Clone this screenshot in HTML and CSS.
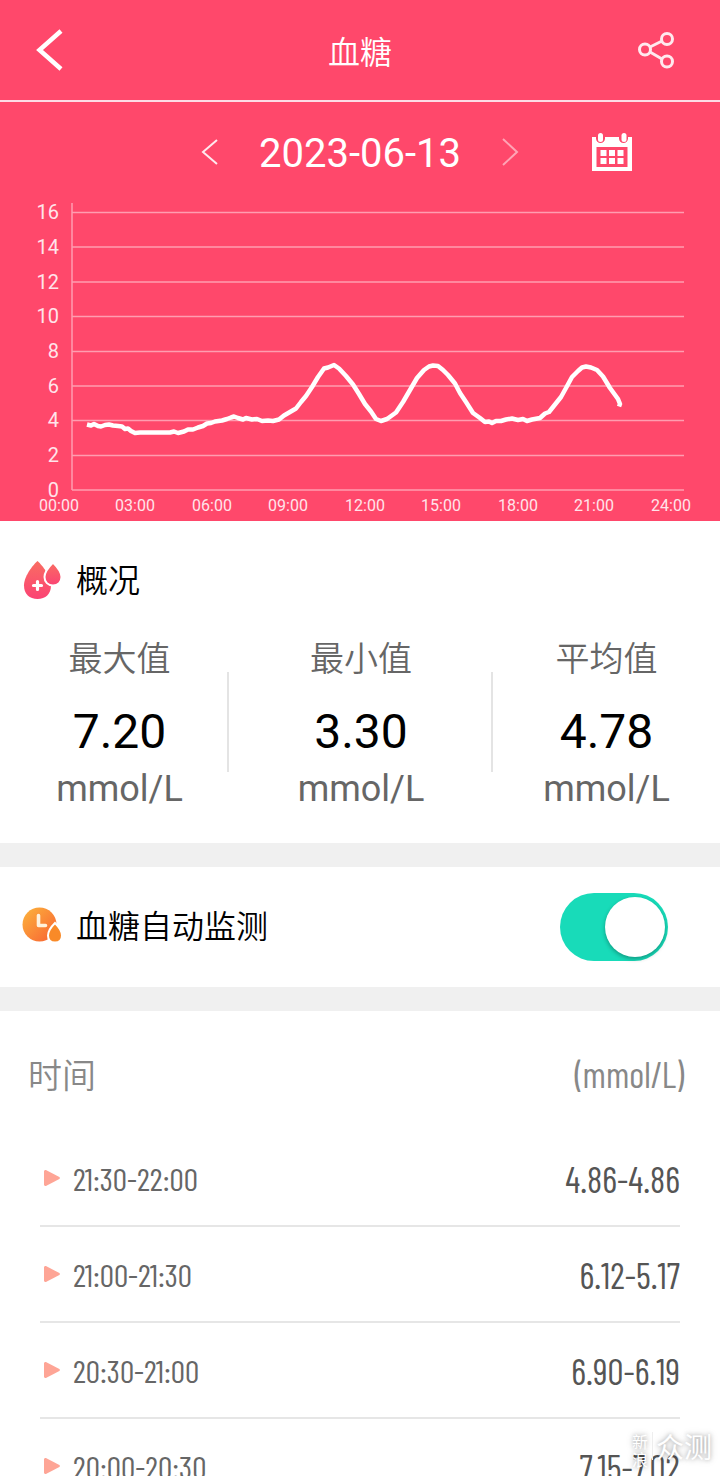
FILE: index.html
```html
<!DOCTYPE html>
<html lang="zh-CN">
<head>
  <meta charset="UTF-8" />
  <meta name="viewport" content="width=device-width, initial-scale=1.0" />
  <title>血糖</title>
  <link rel="stylesheet" href="styles.css">
</head>
<body>
  <div class="screen">
    <header class="navbar">
      <button class="icon-btn back" aria-label="返回">
        <svg width="28" height="42" viewBox="0 0 28 42"><path d="M25 2 3.500 21 25 40" fill="none" stroke="#fff" stroke-width="4.500"/></svg>
      </button>
      <h1>血糖</h1>
      <button class="icon-btn share" aria-label="分享">
        <svg width="38" height="38" viewBox="0 0 38 38" fill="none" stroke="#ffe9ee" stroke-width="3">
          <circle cx="7" cy="18.500" r="5.500"/><circle cx="29" cy="8" r="5.500"/><circle cx="29" cy="30.500" r="5.500"/>
          <path d="M12 16 24 10M12 21 24 28"/>
        </svg>
      </button>
    </header>

    <section class="chart-panel">
      <div class="date-row">
        <div class="date-picker">
          <button class="icon-btn" aria-label="前一天">
            <svg width="18" height="28" viewBox="0 0 18 28"><path d="M16 2 2 14 16 26" fill="none" stroke="#ffe9ee" stroke-width="2"/></svg>
          </button>
          <span class="date">2023-06-13</span>
          <button class="icon-btn next" aria-label="后一天">
            <svg width="18" height="28" viewBox="0 0 18 28"><path d="M2 1 16 14 2 27" fill="none" stroke="#fff" stroke-width="2"/></svg>
          </button>
        </div>
        <button class="icon-btn calendar" aria-label="选择日期">
          <svg width="40" height="38" viewBox="0 0 40 38">
            <path fill="#fff" fill-rule="evenodd" d="M0 4H4V5.500A4.500 4.500 0 0 0 13 5.500V4H27V5.500A4.500 4.500 0 0 0 36 5.500V4H40V38H0ZM4.500 14V34H35.500V14Z"/>
            <rect x="6" y="0" width="5" height="9" rx="2.500" fill="#fff"/><rect x="29.500" y="0" width="5" height="9" rx="2.500" fill="#fff"/>
            <path fill="#fff" d="M8.500 17h6v6h-6zM17 17h6v6h-6zM25.500 17h6v6h-6zM8.500 25h6v6h-6zM17 25h6v6h-6zM25.500 25h6v6h-6z"/>
          </svg>
        </button>
      </div>
      <svg class="chart" viewBox="0 202 720 319" role="img" aria-label="血糖曲线">
        <g class="grid">
          <path d="M72 203V490"/>
          <path d="M72 212.500H684M72 247H684M72 282H684M72 316.500H684M72 351.500H684M72 386H684M72 420.500H684M72 455.500H684M72 490H684"/>
        </g>
        <g class="y-labels">
          <text x="59" y="219">16</text>
          <text x="59" y="254">14</text>
          <text x="59" y="289">12</text>
          <text x="59" y="323">10</text>
          <text x="59" y="358">8</text>
          <text x="59" y="393">6</text>
          <text x="59" y="427">4</text>
          <text x="59" y="462">2</text>
          <text x="59" y="497">0</text>
        </g>
        <g class="x-labels">
          <text x="59" y="511">00:00</text>
          <text x="135" y="511">03:00</text>
          <text x="212" y="511">06:00</text>
          <text x="288" y="511">09:00</text>
          <text x="365" y="511">12:00</text>
          <text x="441" y="511">15:00</text>
          <text x="518" y="511">18:00</text>
          <text x="594" y="511">21:00</text>
          <text x="671" y="511">24:00</text>
        </g>
        <polyline class="curve" points="87,424.500 91,425.500 94,424 98,426 101,426.500 105,425 109,424.500 113,425.500 118,426 122,426.500 125,429 128,428.500 131,431 135,433 140,432.500 170,432.500 174,431.500 178,433 184,431.500 188,429.500 193,429.500 198,427.500 203,426 207,423.500 211,423 215,421.500 222,420.500 227,419 231,417.500 234,416.500 238,418 243,419.500 246,418 252,419.500 257,419 262,421 268,420.500 273,421 279,419.500 284,415.500 290,412 296,408.500 301,402 306,396 312,387 318,377 324,368.500 328,367.500 334,365 339,368.500 346,376 353,384.500 359,394 365,404 371,411.500 376,419 381,421 387,419 396,412.500 403,402 410,390 417,378 424,370 429,366.500 433,365.500 438,366 443,370 448,375 455,383.500 460,393 466,402 473,413 480,418 485,422 489,421.500 492,423 496,421 501,421 506,419.500 512,418.500 518,420 523,419 527,421 532,419.500 540,418 545,413.500 549,412 555,404.500 561,397 566,388 572,377 578,371 582,367.500 586,366.500 591,367.500 597,370 603,376.500 610,388 618,399 620,404 619,406.500"/>
      </svg>
    </section>

    <section class="overview">
      <h2 class="section-title">
        <svg width="40" height="40" viewBox="0 0 40 40">
          <defs><linearGradient id="drop" x1="0" y1="0" x2="0" y2="1"><stop offset="0" stop-color="#f96d62"/><stop offset="1" stop-color="#fb4374"/></linearGradient></defs>
          <path fill="url(#drop)" d="M15.500 0C18 2 29 14 29 24.500C29 33 23.500 38 15.500 38S2 33 2 24.500C2 14 13 2 15.500 0Z"/>
          <path fill="url(#drop)" stroke="#fff" stroke-width="2" d="M31 1.500C33 3.500 39.500 10 39.500 16C39.500 21 36 24.500 31 24.500S22.500 21 22.500 16C22.500 10 29 3.500 31 1.500Z"/>
          <path stroke="#fff" stroke-width="3.200" stroke-linecap="round" d="M11.500 24.500h8M15.500 20.500v8"/>
        </svg>
        概况
      </h2>
      <div class="stats">
        <div class="stat">
          <span class="stat-label">最大值</span>
          <span class="stat-value">7.20</span>
          <span class="stat-unit">mmol/L</span>
        </div>
        <div class="stat">
          <span class="stat-label">最小值</span>
          <span class="stat-value">3.30</span>
          <span class="stat-unit">mmol/L</span>
        </div>
        <div class="stat">
          <span class="stat-label">平均值</span>
          <span class="stat-value">4.78</span>
          <span class="stat-unit">mmol/L</span>
        </div>
      </div>
    </section>

    <section class="monitor">
      <label class="section-title" for="autoMonitor">
        <svg width="40" height="40" viewBox="0 0 40 40">
          <defs><linearGradient id="clock" x1="0" y1="0" x2="1" y2="1"><stop offset="0" stop-color="#fcb53c"/><stop offset="1" stop-color="#f86033"/></linearGradient></defs>
          <circle cx="17.500" cy="17.500" r="17" fill="url(#clock)"/>
          <path fill="none" stroke="#fff1dc" stroke-width="3.600" stroke-linecap="round" stroke-linejoin="round" d="M16.500 8.500V18.500H23.500"/>
          <path fill="#f98a28" stroke="#fff" stroke-width="2" d="M33 16C35 18 40 24 40 28.500C40 33 37.500 35.500 33 35.500S26 33 26 28.500C26 24 31 18 33 16Z"/>
        </svg>
        血糖自动监测
      </label>
      <input type="checkbox" class="switch" id="autoMonitor" checked>
    </section>

    <table class="records">
      <thead>
        <tr><th>时间</th><th class="unit">(mmol/L)</th></tr>
      </thead>
      <tbody>
        <tr><td class="time">21:30-22:00</td><td class="range">4.86-4.86</td></tr>
        <tr><td class="time">21:00-21:30</td><td class="range">6.12-5.17</td></tr>
        <tr><td class="time">20:30-21:00</td><td class="range">6.90-6.19</td></tr>
        <tr><td class="time">20:00-20:30</td><td class="range">7.15-7.02</td></tr>
      </tbody>
    </table>

    <div class="watermark">
      <span class="mark-small">新<br>浪</span>
      <span class="mark-large">众测</span>
    </div>
  </div>
</body>
</html>
```
FILE: styles.css
```css
* {
  box-sizing: border-box;
}
body {
  margin: 0;
  font-family: Roboto, "Noto Sans CJK SC", sans-serif;
  background: #fff;
  color: #000;
}
.screen {
  position: relative;
  height: 100vh;
  overflow: hidden;
}
.icon-btn {
  display: flex;
  padding: 0;
  border: none;
  background: none;
  cursor: pointer;
}
.navbar {
  display: grid;
  grid-template-columns: 1fr auto 1fr;
  align-items: center;
  height: 102px;
  padding: 0 36px;
  background: #ff486b;
  border-bottom: 2px solid #fddbe5;
}
.navbar h1 {
  margin: 0;
  font-size: 32px;
  font-weight: 350;
  color: #fff;
}
.share {
  justify-self: end;
  margin-right: 8px;
}
.chart-panel {
  background: #ff486b;
}
.date-row {
  display: grid;
  grid-template-columns: 1fr auto 1fr;
  align-items: center;
  height: 100px;
}
.date-picker {
  grid-column: 2;
  display: flex;
  align-items: center;
  gap: 40px;
}
.date {
  padding-top: 4px;
  font-size: 40px;
  line-height: 48px;
  color: #fff;
}
.next {
  opacity: 0.5;
}
.calendar {
  justify-self: end;
  margin-right: 88px;
}
.chart {
  display: block;
  width: 100%;
}
.grid path {
  fill: none;
  stroke: #ff9db0;
  stroke-width: 1.5;
}
.y-labels text {
  font-size: 20px;
  fill: #ffe4ea;
  text-anchor: end;
}
.x-labels text {
  font-size: 16px;
  fill: #ffe4ea;
  text-anchor: middle;
}
.curve {
  fill: none;
  stroke: #fff;
  stroke-width: 4.5;
  stroke-linejoin: round;
}
.overview {
  height: 346px;
  padding-top: 36px;
  border-bottom: 24px solid #f0f0f0;
}
.section-title {
  display: flex;
  align-items: center;
  gap: 14px;
  margin: 0;
  padding-left: 22px;
  font-size: 32px;
  line-height: 48px;
  font-weight: 350;
}
.stats {
  display: grid;
  grid-template-columns: 229fr 264fr 227fr;
  padding-top: 29px;
}
.stat {
  display: flex;
  flex-direction: column;
  align-items: center;
  background: linear-gradient(#e4e4e4, #e4e4e4) right 38px / 2px 100px no-repeat;
}
.stat:first-child {
  padding-left: 10px;
}
.stat:last-child {
  background: none;
}
.stat-label {
  font-size: 34px;
  line-height: 50px;
  font-weight: 350;
  color: #666;
}
.stat-value {
  margin-top: 16px;
  font-size: 48px;
  line-height: 64px;
}
.stat-unit {
  font-size: 36px;
  line-height: 50px;
  color: #666;
}
.monitor {
  display: flex;
  align-items: center;
  justify-content: space-between;
  height: 144px;
  padding-right: 52px;
  border-bottom: 24px solid #f0f0f0;
}
.switch {
  appearance: none;
  display: flex;
  align-items: center;
  width: 108px;
  height: 68px;
  margin: 0;
  padding: 0 3px;
  border-radius: 34px;
  background: #ccc;
  cursor: pointer;
}
.switch::before {
  content: "";
  width: 60px;
  height: 60px;
  border-radius: 50%;
  background: #fff;
  box-shadow: 0 2px 4px rgba(0, 0, 0, 0.3);
}
.switch:checked {
  justify-content: flex-end;
  background: #18dbb9;
}
.records {
  display: block;
  font-family: "Barlow Condensed", "Roboto Condensed", "Liberation Sans Narrow", Roboto, "Noto Sans CJK SC", sans-serif;
}
.records thead,
.records tbody {
  display: block;
}
.records tr {
  display: flex;
  align-items: center;
  justify-content: space-between;
}
.records th,
.records td {
  padding: 0;
}
.records thead tr {
  height: 120px;
  padding: 4px 36px 0 28px;
}
.records th {
  font-size: 34px;
  font-weight: 350;
  color: #888;
}
.records .unit {
  font-size: 36px;
  font-weight: 400;
}
.records tbody tr {
  height: 96px;
  margin: 0 40px;
  border-bottom: 2px solid #e6e6e6;
}
.time {
  display: flex;
  align-items: center;
  gap: 13px;
  font-size: 32px;
  color: #666;
}
.time::before {
  content: "";
  width: 16px;
  height: 16px;
  margin-left: 4px;
  background: #fea596;
  clip-path: polygon(0 6%, 6% 0, 12% 0, 96% 44%, 100% 50%, 96% 56%, 12% 100%, 6% 100%, 0 94%);
}
.range {
  font-size: 36px;
  color: #555;
}
.watermark {
  position: absolute;
  right: 8px;
  bottom: 8px;
  display: flex;
  align-items: flex-start;
  gap: 4px;
  font-family: "Noto Sans CJK SC", sans-serif;
  color: #fff;
  text-shadow: 0 0 4px rgba(0, 0, 0, 0.3), 0 0 8px rgba(0, 0, 0, 0.2);
}
.mark-small {
  font-size: 16px;
  line-height: 18px;
}
.mark-large {
  padding-left: 3px;
  border-left: 1px solid #eee;
  font-size: 28px;
  line-height: 28px;
}
```
